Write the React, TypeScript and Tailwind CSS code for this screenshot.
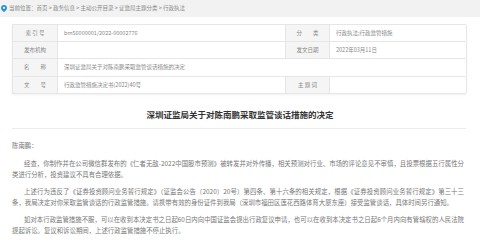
const rows = [
  { k1: "索 引 号", v1: "bm56000001/2022-00002776", k2: "分　　类", v2: "行政执法;行政监管措施" },
  { k1: "发布机构", v1: "", k2: "发文日期", v2: "2022年03月11日" },
];

const para1 = [
  "经查，你制作并在公司微信群发布的《仁者无敌-2022中国股市预测》被转发并对外传播，相关预测对行业、市场的评论意见不审慎，且投票根据五行属性分",
  "类进行分析，投资建议不具有合理依据。",
];
const para2 = [
  "上述行为违反了《证券投资顾问业务暂行规定》（证监会公告〔2020〕20号）第四条、第十六条的相关规定，根据《证券投资顾问业务暂行规定》第三十三",
  "条，我局决定对你采取监管谈话的行政监管措施。请携带有效的身份证件到我局（深圳市福田区莲花西路体育大厦东座）接受监管谈话，具体时间另行通知。",
];
const para3 = [
  "如对本行政监管措施不服，可以在收到本决定书之日起60日内向中国证监会提出行政复议申请，也可以在收到本决定书之日起6个月内向有管辖权的人民法院",
  "提起诉讼。复议和诉讼期间，上述行政监管措施不停止执行。",
];

function Para({ lines }: { lines: string[] }) {
  return (
    <div className="mb-[6px]">
      {lines.map((l, i) => (
        <div
          key={i}
          className={
            (i === 0 ? "pl-[12px] " : "") +
            (i < lines.length - 1 ? "text-justify [text-align-last:justify] " : "") +
            "h-[11px] leading-[11px] whitespace-nowrap"
          }
        >
          {l}
        </div>
      ))}
    </div>
  );
}

function Label({ children }: { children: React.ReactNode }) {
  return (
    <div className="flex items-center justify-center bg-[#f5f5f5] border-r border-[#e6e6e6] whitespace-pre">
      {children}
    </div>
  );
}

function Value({ children, span }: { children?: React.ReactNode; span?: boolean }) {
  return (
    <div className={(span ? "col-span-3 " : "") + "flex items-center pl-[6px] border-r border-[#e6e6e6] whitespace-nowrap"}>
      {children}
    </div>
  );
}

export default function App() {
  return (
    <div className="w-[480px] h-[250px] overflow-hidden bg-white font-['Noto_Sans_CJK_SC',sans-serif]">
      <div className="h-[17px] bg-[#f2f2f2] flex items-center pl-[1px] gap-[2px] text-[5.5px] text-[#888]">
        <svg width="6" height="7" viewBox="0 0 12 14">
          <path d="M6 0C2.7 0 0 2.6 0 5.8 0 10 6 14 6 14s6-4 6-8.2C12 2.6 9.3 0 6 0z" fill="#2a8fd6" />
          <circle cx="6" cy="5.6" r="2.2" fill="#fff" />
        </svg>
        <span>当前位置：首页 &gt; 政务信息 &gt; 主动公开目录 &gt; 证监局主题分类 &gt; 行政执法</span>
      </div>

      <div className="mx-[12px] mt-[7px] w-[454px] border-l border-t border-[#e6e6e6] shadow-[0_1px_2px_rgba(0,0,0,0.06)] text-[5.5px] text-[#888]">
        {rows.map((r) => (
          <div key={r.k1} className="grid grid-cols-[45px_228px_44px_137px] h-[17px] border-b border-[#e6e6e6]">
            <Label>{r.k1}</Label>
            <Value>{r.v1}</Value>
            <Label>{r.k2}</Label>
            <Value>{r.v2}</Value>
          </div>
        ))}
        <div className="grid grid-cols-[45px_228px_44px_137px] h-[18px] border-b border-[#e6e6e6]">
          <Label>{"名　　称"}</Label>
          <Value span>深圳证监局关于对陈南鹏采取监管谈话措施的决定</Value>
        </div>
        <div className="grid grid-cols-[45px_228px_44px_137px] h-[17px] border-b border-[#e6e6e6]">
          <Label>{"文　　号"}</Label>
          <Value>行政监管措施决定书(2022)40号</Value>
          <Label>主 题 词</Label>
          <Value />
        </div>
      </div>

      <div className="mt-[14px] text-center text-[8.5px] font-bold text-[#333] leading-[12px]">
        深圳证监局关于对陈南鹏采取监管谈话措施的决定
      </div>

      <div className="mx-[12px] mt-[8px] w-[454px] h-[1px] bg-[#ececec]" />

      <div className="mx-[12px] mt-[11px] w-[452px] text-[6.4px] text-[#777]">
        <div className="h-[11px] leading-[11px] mb-[7px]">陈南鹏：</div>
        <Para lines={para1} />
        <Para lines={para2} />
        <Para lines={para3} />
      </div>
    </div>
  );
}
